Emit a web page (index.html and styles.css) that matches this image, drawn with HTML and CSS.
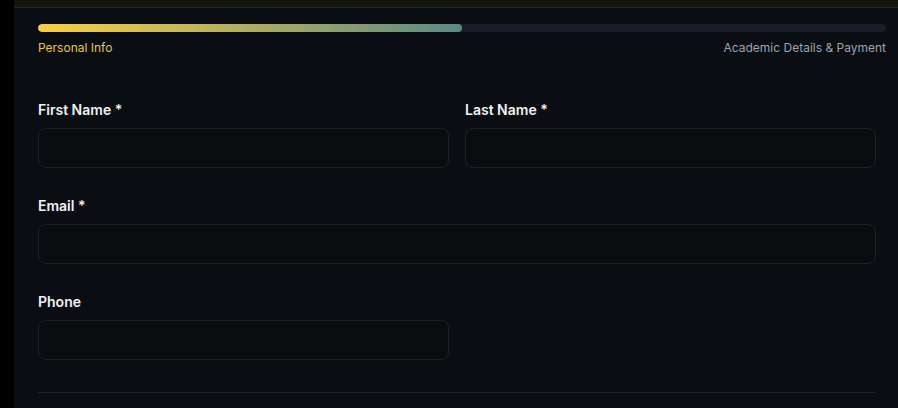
FILE: index.html
```html
<!DOCTYPE html>
<html lang="en">
<head>
<meta charset="utf-8">
<title>Registration</title>
<link rel="stylesheet" href="styles.css">
</head>
<body>
<div class="app">
  <aside class="rail"></aside>
  <main class="main">
    <header class="topbar"></header>
    <section class="content">
      <div class="progress">
        <div class="track"><div class="fill" style="width:50%"></div></div>
        <div class="steps">
          <span class="step active">Personal Info</span>
          <span class="step">Academic Details &amp; Payment</span>
        </div>
      </div>
      <form class="form">
        <div class="row two">
          <label class="field">
            <span class="label">First Name *</span>
            <input class="input" type="text">
          </label>
          <label class="field">
            <span class="label">Last Name *</span>
            <input class="input" type="text">
          </label>
        </div>
        <div class="row">
          <label class="field">
            <span class="label">Email *</span>
            <input class="input" type="email">
          </label>
        </div>
        <div class="row two">
          <label class="field">
            <span class="label">Phone</span>
            <input class="input" type="tel">
          </label>
        </div>
        <hr class="divider">
      </form>
    </section>
  </main>
</div>
</body>
</html>
```
FILE: styles.css
```css
* { box-sizing: border-box; }
html, body { margin: 0; height: 100%; }
body {
  background: #000;
  font-family: Inter, "Noto Sans", "Liberation Sans", sans-serif;
  overflow: hidden;
}
.app { display: flex; height: 100%; }
.rail { width: 14px; flex: none; background: #000; }
.main { flex: 1; background: #0a0d12; display: flex; flex-direction: column; }
.topbar { height: 8px; background: #15150f; border-bottom: 1px solid #23262b; flex: none; }
.content { padding: 16px 12px 0 24px; }
.track {
  height: 8px;
  border-radius: 4px;
  background: #1a1c27;
  overflow: hidden;
}
.fill {
  height: 100%;
  border-radius: 4px;
  background: linear-gradient(90deg, #f8cf46 0%, #b7b060 45%, #598985 100%);
}
.steps {
  display: flex;
  justify-content: space-between;
  margin-top: 8px;
  font-size: 12px;
  font-weight: 400;
  line-height: 16px;
}
.step { color: #9ca3af; }
.step.active { color: #e8c547; }
.form { padding-right: 10px; margin-top: 44px; display: flex; flex-direction: column; gap: 28px; }
.row { display: grid; grid-template-columns: 1fr; gap: 16px; }
.row.two { grid-template-columns: 1fr 1fr; }
.field { display: flex; flex-direction: column; }
.label {
  color: #f1f2f4;
  font-size: 14px;
  font-weight: 600;
  line-height: 20px;
  margin-bottom: 8px;
}
.input {
  height: 40px;
  border: 1px solid #1d212a;
  border-radius: 8px;
  background: #0a0c10;
  color: #e5e7eb;
  padding: 0 12px;
  font: inherit;
  outline: none;
}
.divider {
  border: 0;
  border-top: 1px solid #1c2230;
  margin: 4px 0 0;
}
```
